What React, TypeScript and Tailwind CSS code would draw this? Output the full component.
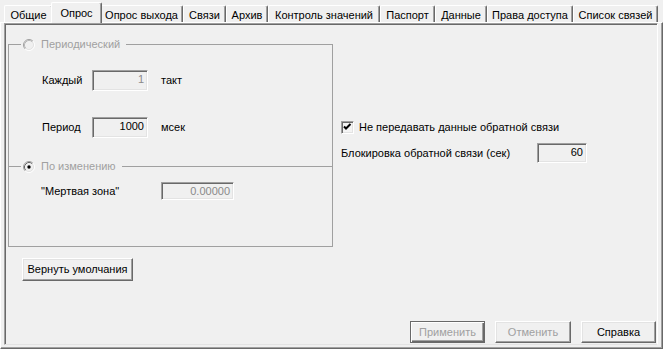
import React from 'react'

const tabs: { label: string; w: string; active?: boolean }[] = [
  { label: 'Общие', w: 'w-[49px]' },
  { label: 'Опрос', w: 'w-[51px]', active: true },
  { label: 'Опрос выхода', w: 'w-[83px]' },
  { label: 'Связи', w: 'w-[43px]' },
  { label: 'Архив', w: 'w-[42px]' },
  { label: 'Контроль значений', w: 'w-[112px]' },
  { label: 'Паспорт', w: 'w-[55px]' },
  { label: 'Данные', w: 'w-[52px]' },
  { label: 'Права доступа', w: 'w-[86px]' },
  { label: 'Список связей', w: 'w-[85px]' },
]

const sunken =
  'border border-t-[#a0a0a0] border-l-[#a0a0a0] border-r-white border-b-white shadow-[inset_1px_1px_0_#696969,inset_-1px_-1px_0_#e3e3e3]'

const raised =
  'border border-t-white border-l-white border-r-[#696969] border-b-[#696969] shadow-[inset_-1px_-1px_0_#a0a0a0,inset_1px_1px_0_#e3e3e3]'

function Field({ value, className, gray }: { value: string; className: string; gray?: boolean }) {
  return (
    <div
      className={`flex items-start justify-end pr-[3px] pt-[2px] leading-[13px] bg-[#f0f0f0] ${sunken} ${className} ${
        gray ? 'text-[#8a8a8a]' : 'text-black'
      }`}
    >
      {value}
    </div>
  )
}

function Radio({ checked }: { checked?: boolean }) {
  return (
    <svg width="12" height="12" viewBox="0 0 12 12" className="shrink-0">
      <circle cx="6" cy="6" r="5" fill="#f0f0f0" />
      <path d="M2.11 9.89 A5.5 5.5 0 0 1 9.89 2.11" stroke="#a0a0a0" fill="none" />
      <path d="M9.89 2.11 A5.5 5.5 0 0 1 2.11 9.89" stroke="#ffffff" fill="none" />
      <path d="M2.82 9.18 A4.5 4.5 0 0 1 9.18 2.82" stroke={checked ? '#696969' : '#b8b8b8'} fill="none" />
      <path d="M9.18 2.82 A4.5 4.5 0 0 1 2.82 9.18" stroke="#e3e3e3" fill="none" />
      {checked && <circle cx="6" cy="6" r="1.7" fill="#000" />}
    </svg>
  )
}

function Checkbox() {
  return (
    <div className={`w-[13px] h-[13px] bg-[#f4f4f4] shrink-0 ${sunken}`}>
      <svg width="11" height="11" viewBox="0 0 11 11">
        <path d="M2 4.5 L4 6.5 L8.5 2" stroke="#000" strokeWidth="2" fill="none" />
      </svg>
    </div>
  )
}

function Button({ label, className, disabled, isDefault }: { label: string; className: string; disabled?: boolean; isDefault?: boolean }) {
  const frame = isDefault
    ? 'border border-[#696969] shadow-[inset_1px_1px_0_#ffffff,inset_-1px_-1px_0_#696969,inset_-2px_-2px_0_#a0a0a0]'
    : raised
  return (
    <div
      className={`flex items-center justify-center bg-[#f0f0f0] ${frame} ${className} ${
        disabled ? 'text-[#a0a0a0]' : 'text-black'
      }`}
    >
      {label}
    </div>
  )
}

function Legend({ label, checked }: { label: string; checked?: boolean }) {
  return (
    <legend className="ml-[12px] pl-[2px] pr-[6px]">
      <span className="flex items-center gap-[6px] h-[13px] leading-[13px] text-[#a0a0a0]">
        <Radio checked={checked} />
        {label}
      </span>
    </legend>
  )
}

export default function App() {
  return (
    <div className="w-[663px] h-[349px] bg-[#f0f0f0] text-[11px] text-black flex flex-col overflow-hidden font-['Liberation_Sans',Arial,sans-serif]">
      {/* tab strip */}
      <div className="h-[22px] flex items-end pl-[4px] shrink-0">
        {tabs.map(t =>
          t.active ? (
            <div
              key={t.label}
              className={`${t.w} h-[21px] -mx-[2px] -mb-px relative z-10 bg-[#f0f0f0] flex items-start justify-center pt-[2px] border-t border-l border-white border-r border-r-[#696969] rounded-t-[2px] shadow-[inset_-1px_0_0_#a0a0a0]`}
            >
              {t.label}
            </div>
          ) : (
            <div
              key={t.label}
              className={`${t.w} h-[17px] flex items-start justify-center pt-[1px] border-t border-l border-white border-r border-r-[#696969] rounded-t-[2px] shadow-[inset_-1px_0_0_#a0a0a0]`}
            >
              {t.label}
            </div>
          )
        )}
      </div>

      {/* tab page */}
      <div className="flex-1 flex flex-col border-t border-l border-white border-r border-b border-r-[#696969] border-b-[#696969] shadow-[inset_-1px_-1px_0_#a0a0a0] pl-[3px] pr-[4px] pb-[3px]">
        <div className="flex-1 flex flex-col border-t border-l border-t-[#a0a0a0] border-l-[#a0a0a0] border-r border-b border-r-white border-b-[#e3e3e3] shadow-[inset_1px_1px_0_#696969]">
          <div className="flex">
            {/* left column */}
            <div className="ml-[3px] mt-[14px] w-[325px] flex flex-col">
              <fieldset className="border border-b-0 border-[#a0a0a0] pb-[28px]">
                <Legend label="Периодический" />
                <div className="mt-[19px] h-[21px] flex items-center pl-[33px]">
                  <span className="w-[50px]">Каждый</span>
                  <Field value="1" className="w-[56px] h-[21px]" gray />
                  <span className="ml-[13px]">такт</span>
                </div>
                <div className="mt-[26px] h-[21px] flex items-center pl-[33px]">
                  <span className="w-[50px]">Период</span>
                  <Field value="1000" className="w-[56px] h-[21px]" />
                  <span className="ml-[13px]">мсек</span>
                </div>
              </fieldset>
              <fieldset className="-mt-[6px] border border-[#a0a0a0] pb-[46px]">
                <Legend label="По изменению" checked />
                <div className="mt-[9px] h-[18px] flex items-center pl-[32px]">
                  <span className="w-[120px]">"Мертвая зона"</span>
                  <Field value="0.00000" className="w-[73px] h-[18px]" gray />
                </div>
              </fieldset>
              <Button label="Вернуть умолчания" className="mt-[11px] ml-[14px] w-[111px] h-[23px]" />
            </div>

            {/* right column */}
            <div className="ml-[8px] pt-[97px] flex flex-col">
              <div className="h-[13px] flex items-center gap-[5px]">
                <Checkbox />
                <span>Не передавать данные обратной связи</span>
              </div>
              <div className="mt-[9px] h-[20px] flex items-center">
                <span className="w-[196px]">Блокировка обратной связи (сек)</span>
                <Field value="60" className="w-[50px] h-[20px]" />
              </div>
            </div>
          </div>

          {/* bottom buttons */}
          <div className="mt-auto flex justify-end gap-[10px] pr-[1px] pb-[1px]">
            <Button label="Применить" className="w-[75px] h-[22px]" disabled isDefault />
            <Button label="Отменить" className="w-[76px] h-[22px]" disabled />
            <Button label="Справка" className="w-[75px] h-[22px]" />
          </div>
        </div>
      </div>
    </div>
  )
}
